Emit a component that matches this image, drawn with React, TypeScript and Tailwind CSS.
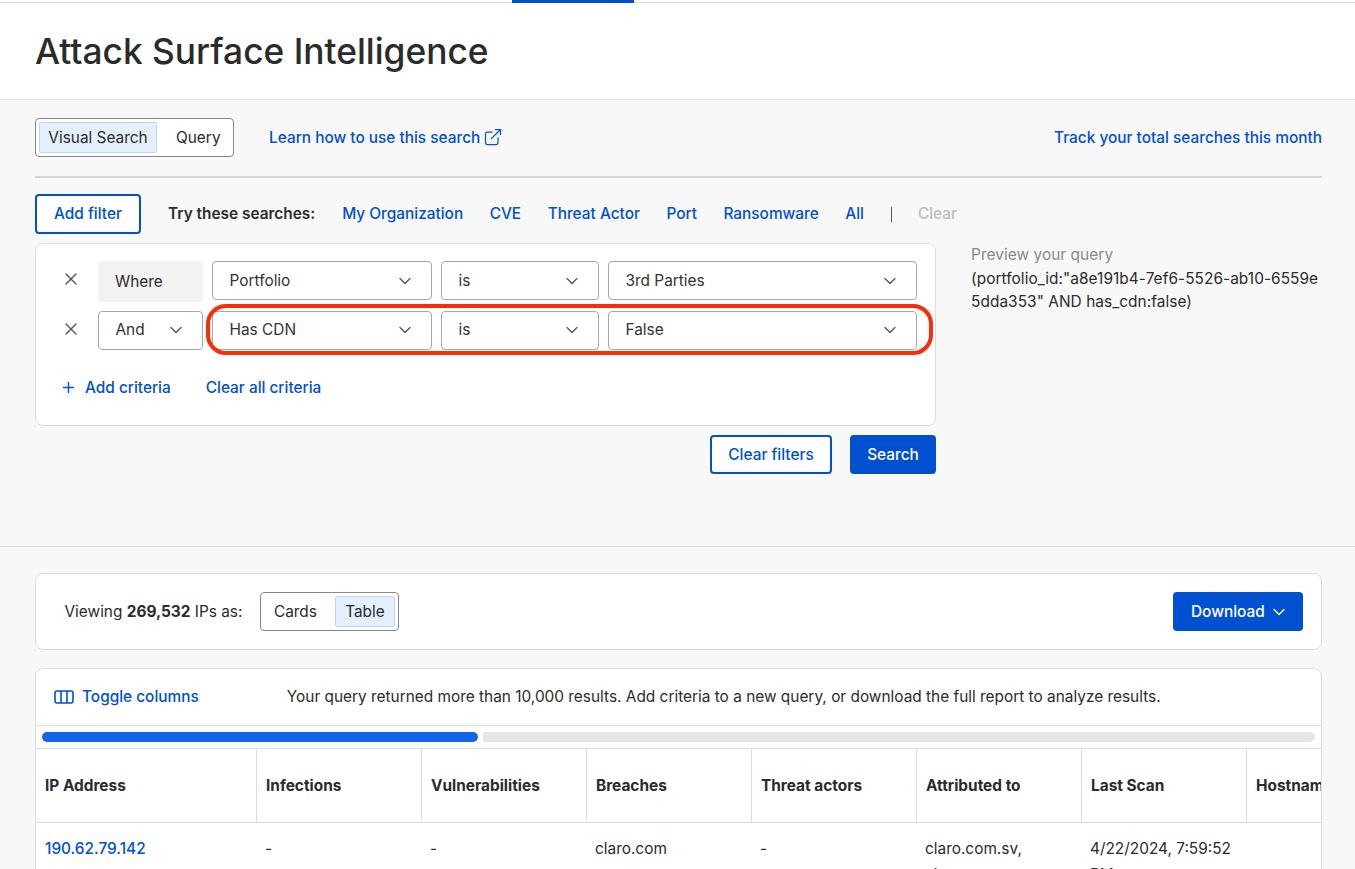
import { ChevronDown, ExternalLink, Plus, X } from "lucide-react";
import React from "react";

const FONT = "font-['Inter','Liberation_Sans',sans-serif]";

const Select = ({ label, className }: { label: string; className: string }) => (
  <div
    className={`flex h-[39px] items-center justify-between rounded-[4px] border border-[#a8a8a8] bg-white pl-[16.5px] pr-[16px] text-[15.4px] text-[#333] ${className}`}
  >
    <span>{label}</span>
    <ChevronDown size={20} strokeWidth={1.6} className="text-[#555]" />
  </div>
);

const Link = ({ children, className = "" }: { children: React.ReactNode; className?: string }) => (
  <a className={`text-[15.4px] font-medium text-[#0050cf] ${className}`}>{children}</a>
);

const columns = ["Infections", "Vulnerabilities", "Breaches", "Threat actors", "Attributed to", "Last Scan", "Hostnames"];

export default function App() {
  return (
    <div className={`h-[869px] overflow-hidden bg-[#f8f8f8] text-[#2b2b2b] ${FONT}`}>
      <div className="h-[3px] border-b border-[#dedede] bg-white">
        <div className="ml-[512px] h-[3px] w-[122px] bg-[#0050cf]" />
      </div>
      <header className="flex h-[97px] items-center border-b border-[#e2e2e2] bg-white px-[35px]">
        <h1 className="pt-[2px] text-[35.3px] font-medium text-[#2b2b2b]">Attack Surface Intelligence</h1>
      </header>

      <section className="h-[447px] border-b border-[#dedede] pl-[35px] pr-[33px] pt-[18px]">
        <div className="flex h-[39px] items-center justify-between">
          <div className="flex items-center">
            <div className="flex h-[39px] w-[199px] items-center rounded-[4px] border border-[#888] bg-white px-[3px] text-[15.4px]">
              <span className="flex h-[31px] w-[118px] items-center justify-center rounded-[2px] border border-[#bcd6fb] bg-[#e5f0ff]">Visual Search</span>
              <span className="pl-[19px]">Query</span>
            </div>
            <Link className="ml-[35px] flex items-center gap-[3px]">
              Learn how to use this search
              <ExternalLink size={20} strokeWidth={1.5} />
            </Link>
          </div>
          <Link>Track your total searches this month</Link>
        </div>
        <div className="mt-[19px] h-[2px] bg-[#d6d6d6]" />

        <div className="mt-[16px] flex h-[40px] items-center">
          <button className="h-[40px] w-[106px] rounded-[4px] border-2 border-[#0050cf] bg-white text-[15.4px] font-medium text-[#0050cf]">Add filter</button>
          <span className="ml-[27px] text-[15.4px] font-semibold">Try these searches:</span>
          <div className="ml-[27px] flex items-center gap-[26.5px]">
            <Link>My Organization</Link>
            <Link>CVE</Link>
            <Link>Threat Actor</Link>
            <Link>Port</Link>
            <Link>Ransomware</Link>
            <Link>All</Link>
          </div>
          <span className="ml-[27px] h-[15px] w-px bg-[#555]" />
          <span className="ml-[26px] text-[15.4px] font-medium text-[#bdbdbd]">Clear</span>
        </div>

        <div className="mt-[9px] flex">
          <div className="w-[901px] shrink-0">
            <div className="relative h-[183px] rounded-[8px] border border-[#dcdcdc] bg-white pl-[25px] pt-[17px]">
              <div className="flex items-start">
                <X size={20} strokeWidth={1.6} className="mt-[8px] text-[#555]" />
                <div className="ml-[17px] flex h-[41px] w-[105px] items-center rounded-[4px] bg-[#f2f2f2] pl-[17px] text-[15.4px]">Where</div>
                <Select label="Portfolio" className="ml-[9px] w-[220px]" />
                <Select label="is" className="ml-[9px] w-[158px]" />
                <Select label="3rd Parties" className="ml-[9px] w-[309px]" />
              </div>
              <div className="mt-[9px] flex items-start">
                <X size={20} strokeWidth={1.6} className="mt-[8px] text-[#555]" />
                <Select label="And" className="ml-[17px] w-[105px] pb-[1px]" />
                <Select label="Has CDN" className="ml-[9px] w-[220px] pb-[1px]" />
                <Select label="is" className="ml-[9px] w-[158px] pb-[1px]" />
                <Select label="False" className="ml-[9px] w-[309px] pb-[1px]" />
              </div>
              <div className="mt-[26px] flex items-center">
                <Plus size={17} strokeWidth={2} className="-ml-[1px] text-[#0050cf]" />
                <Link className="ml-[8px]">Add criteria</Link>
                <Link className="ml-[35px]">Clear all criteria</Link>
              </div>
              <div className="absolute left-[170px] top-[60px] h-[51px] w-[727px] rounded-[20px] border-[4.5px] border-[#fb2c08]" />
            </div>
            <div className="mt-[9px] flex justify-end gap-[18px]">
              <button className="h-[39px] w-[122px] rounded-[4px] border-2 border-[#0050cf] bg-white text-[15.4px] font-medium text-[#0050cf]">Clear filters</button>
              <button className="h-[39px] w-[86px] rounded-[4px] bg-[#0050cf] text-[15.4px] font-medium text-white">Search</button>
            </div>
          </div>
          <div className="ml-[35px] w-[351px] text-[15.4px] leading-[23.5px] tracking-[0.06px]">
            <div className="text-[#8a8a8a]">Preview your query</div>
            <div className="whitespace-nowrap">(portfolio_id:"a8e191b4-7ef6-5526-ab10-6559e<br />5dda353" AND has_cdn:false)</div>
          </div>
        </div>
      </section>

      <div className="pl-[35px] pr-[33px] pt-[26px]">
        <div className="flex h-[77px] items-center justify-between rounded-[8px] border border-[#dcdcdc] bg-white pl-[28.5px] pr-[18px] text-[15.4px]">
          <div className="flex items-center">
            <span>Viewing <b className="font-bold">269,532</b> IPs as:</span>
            <div className="ml-[17.5px] flex h-[39px] w-[139px] items-center rounded-[4px] border border-[#888] bg-white px-[3px]">
              <span className="flex-1 pl-[10px]">Cards</span>
              <span className="flex h-[31px] w-[60px] items-center justify-center rounded-[2px] border border-[#bcd6fb] bg-[#e5f0ff]">Table</span>
            </div>
          </div>
          <button className="flex h-[39px] w-[130px] items-center gap-[4px] rounded-[4px] bg-[#0050cf] pl-[18px] font-medium text-white">
            Download
            <ChevronDown size={20} strokeWidth={1.75} />
          </button>
        </div>

        <div className="mt-[18px] overflow-hidden rounded-t-[8px] border border-[#dcdcdc] bg-white">
          <div className="flex h-[57px] items-center border-b border-[#e2e2e2] text-[15.4px]">
            <svg width="20" height="14" viewBox="0 0 20 14" fill="none" stroke="#0050cf" strokeWidth="1.6" className="ml-[18px]">
              <rect x="1" y="1" width="18" height="12" rx="2" />
              <path d="M7 1v12M13 1v12" />
            </svg>
            <Link className="ml-[8px]">Toggle columns</Link>
            <span className="ml-[88px]">Your query returned more than 10,000 results. Add criteria to a new query, or download the full report to analyze results.</span>
          </div>
          <div className="flex h-[23px] items-center gap-[5px] border-b border-[#dcdcdc] px-[6px] pb-[1px]">
            <div className="h-[10px] w-[436px] rounded-full bg-[#1264e8]" />
            <div className="h-[10px] flex-1 rounded-r-full bg-[#e6e6e6]" />
          </div>
          <div className="grid w-[1376px] grid-cols-[221px_repeat(7,165px)] text-[15.4px]">
            <div className="flex h-[74px] items-center border-b border-r border-[#dcdcdc] pl-[9px] font-bold">IP Address</div>
            {columns.map((c) => (
              <div key={c} className="flex h-[74px] items-center border-b border-r border-[#dcdcdc] pl-[9px] font-bold">{c}</div>
            ))}
            <div className="pl-[9px] pt-[13px] font-medium leading-[26px] text-[#0050cf]">190.62.79.142</div>
            <div className="pl-[8px] pt-[13px] leading-[26px]">-</div>
            <div className="pl-[8px] pt-[13px] leading-[26px]">-</div>
            <div className="pl-[8px] pt-[13px] leading-[26px]">claro.com</div>
            <div className="pl-[8px] pt-[13px] leading-[26px]">-</div>
            <div className="pl-[8px] pt-[13px] leading-[26px]">claro.com.sv,<br />claro.com</div>
            <div className="pl-[8px] pt-[13px] leading-[26px]">4/22/2024, 7:59:52<br />PM</div>
            <div />
          </div>
        </div>
      </div>
    </div>
  );
}
